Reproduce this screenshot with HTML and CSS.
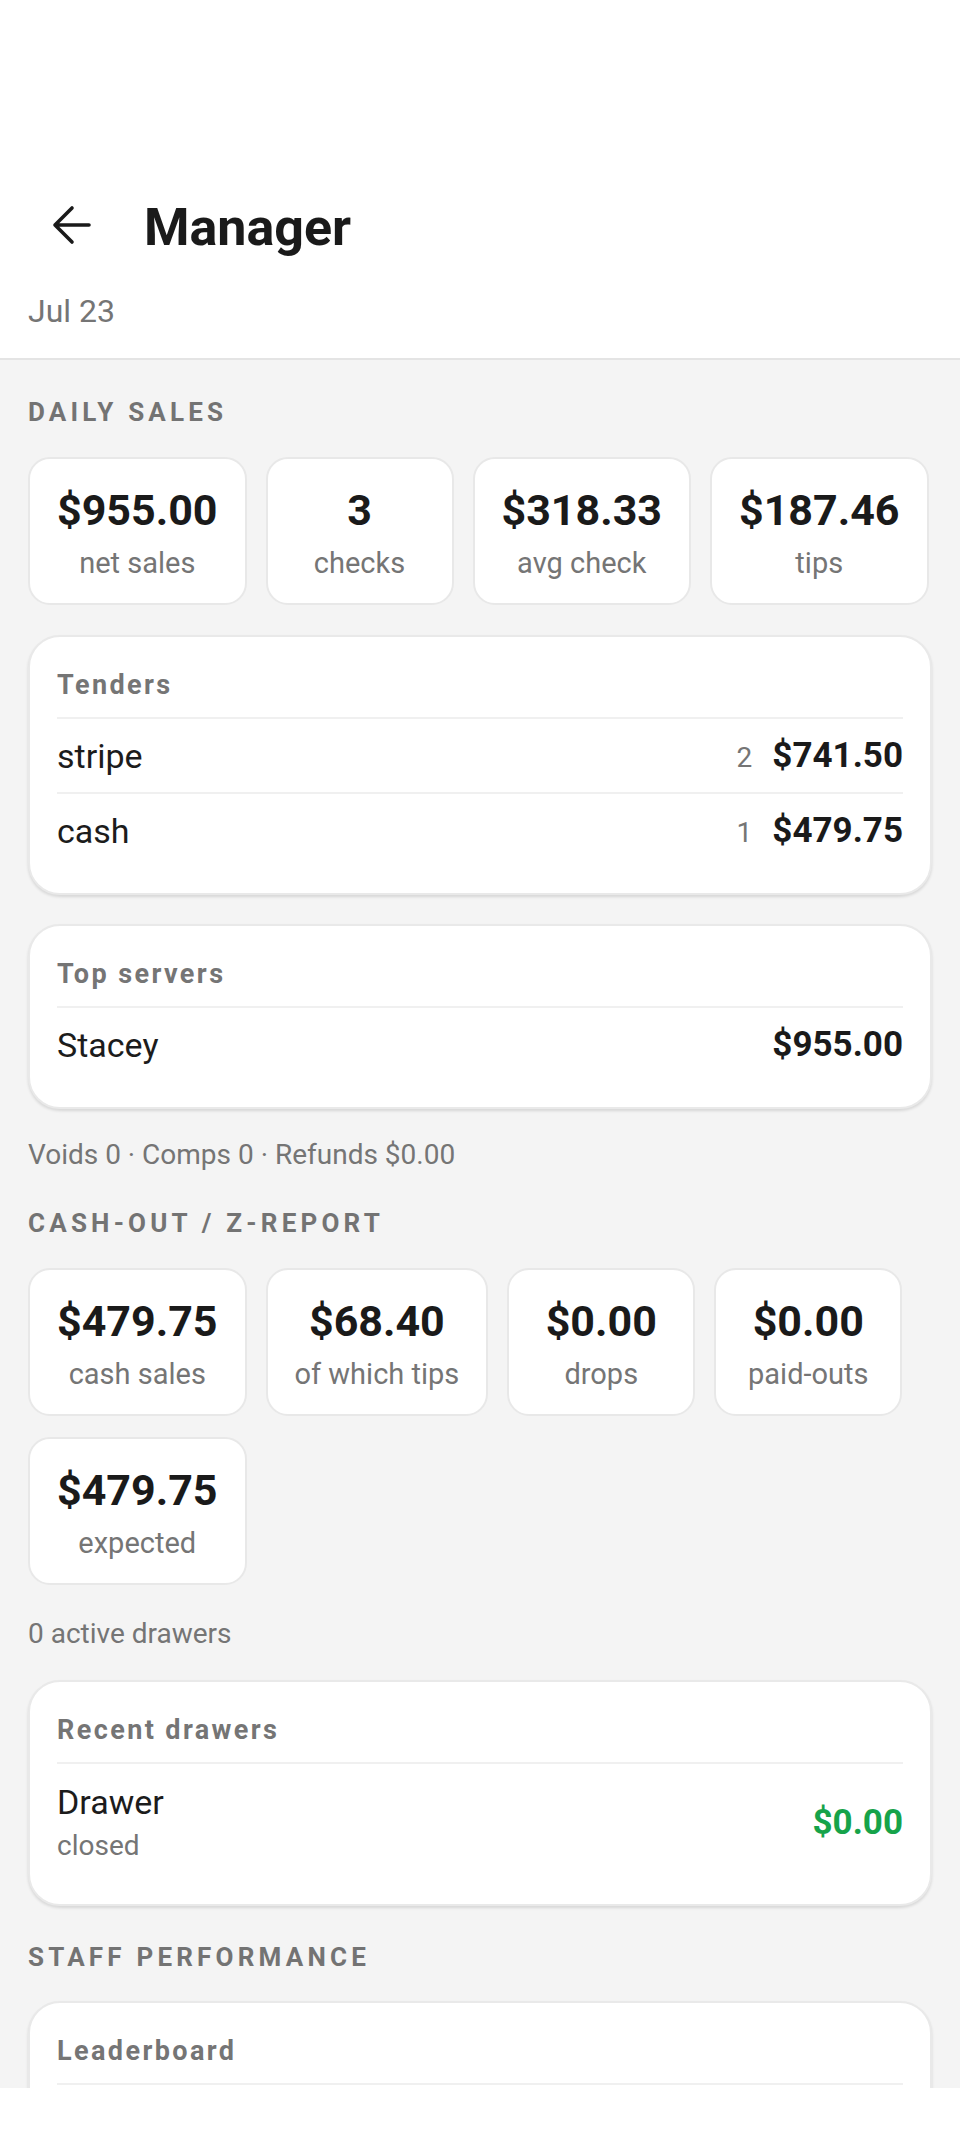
FILE: index.html
```html
<!DOCTYPE html>
<html lang="en">
<head>
<meta charset="utf-8">
<title>Manager</title>
<link rel="stylesheet" href="styles.css">
</head>
<body>
<div class="screen">
  <header class="topbar">
    <div class="title-row">
      <button class="back" aria-label="Back">
        <svg viewBox="0 0 40 40" aria-hidden="true"><path d="M38 20H4M21 3L4 20L21 37"/></svg>
      </button>
      <h1 class="title">Manager</h1>
    </div>
    <div class="date">Jul 23</div>
  </header>

  <main class="content">
    <h2 class="section-label first">DAILY SALES</h2>
    <div class="stats">
      <div class="stat"><div class="stat-value">$955.00</div><div class="stat-label">net sales</div></div>
      <div class="stat"><div class="stat-value">3</div><div class="stat-label">checks</div></div>
      <div class="stat"><div class="stat-value">$318.33</div><div class="stat-label">avg check</div></div>
      <div class="stat"><div class="stat-value">$187.46</div><div class="stat-label">tips</div></div>
    </div>

    <section class="card after-stats">
      <h3 class="card-title">Tenders</h3>
      <div class="row">
        <span class="row-name">stripe</span>
        <span class="row-right"><span class="count">2</span><span class="amount">$741.50</span></span>
      </div>
      <div class="row">
        <span class="row-name">cash</span>
        <span class="row-right"><span class="count">1</span><span class="amount">$479.75</span></span>
      </div>
    </section>

    <section class="card">
      <h3 class="card-title">Top servers</h3>
      <div class="row">
        <span class="row-name">Stacey</span>
        <span class="row-right"><span class="amount">$955.00</span></span>
      </div>
    </section>

    <p class="note">Voids 0 · Comps 0 · Refunds $0.00</p>

    <h2 class="section-label">CASH-OUT / Z-REPORT</h2>
    <div class="stats">
      <div class="stat"><div class="stat-value">$479.75</div><div class="stat-label">cash sales</div></div>
      <div class="stat"><div class="stat-value">$68.40</div><div class="stat-label">of which tips</div></div>
      <div class="stat"><div class="stat-value">$0.00</div><div class="stat-label">drops</div></div>
      <div class="stat"><div class="stat-value">$0.00</div><div class="stat-label">paid-outs</div></div>
      <div class="stat"><div class="stat-value">$479.75</div><div class="stat-label">expected</div></div>
    </div>

    <p class="note after-stats-note">0 active drawers</p>

    <section class="card">
      <h3 class="card-title">Recent drawers</h3>
      <div class="row row-double">
        <span class="row-left">
          <span class="row-name">Drawer</span>
          <span class="row-sub">closed</span>
        </span>
        <span class="row-right"><span class="amount positive">$0.00</span></span>
      </div>
    </section>

    <h2 class="section-label">STAFF PERFORMANCE</h2>
    <section class="card after-label">
      <h3 class="card-title">Leaderboard</h3>
      <div class="row row-empty"></div>
      <div class="row row-empty"></div>
    </section>
  </main>

  <div class="navbar"></div>
</div>
</body>
</html>
```

FILE: styles.css
```css
* {
  box-sizing: border-box;
}

html,
body {
  margin: 0;
  padding: 0;
}

body {
  width: 960px;
  height: 2142px;
  overflow: hidden;
  background: #f4f4f4;
  font-family: Roboto, "Noto Sans", "Liberation Sans", Arial, sans-serif;
  color: #1c1c1c;
}

.screen {
  width: 960px;
}

/* Header */
.topbar {
  background: #ffffff;
  padding: 191px 28px 28px;
  border-bottom: 2px solid #e4e4e4;
}

.title-row {
  display: flex;
  align-items: center;
  height: 67px;
}

.back {
  width: 48px;
  height: 48px;
  margin-left: 19px;
  padding: 0;
  border: 0;
  background: none;
  display: flex;
  align-items: center;
  justify-content: center;
}

.back svg {
  width: 40px;
  height: 40px;
  display: block;
  fill: none;
  stroke: #1a1a1a;
  stroke-width: 3.6;
  stroke-linecap: round;
  stroke-linejoin: round;
}

.title {
  margin: 0 0 0 49px;
  padding-top: 6px;
  font-size: 52px;
  line-height: 61px;
  font-weight: 700;
  color: #1a1a1a;
}

.date {
  margin-top: 34px;
  font-size: 32px;
  line-height: 38px;
  color: #757575;
}

/* Content */
.content {
  display: flex;
  flex-direction: column;
  padding: 0 28px;
}

.section-label {
  margin: 35px 0 0;
  font-size: 26px;
  line-height: 32px;
  font-weight: 700;
  letter-spacing: 4.2px;
  color: #737373;
}

.section-label.first {
  margin-top: 36px;
}

.stats {
  display: flex;
  flex-wrap: wrap;
  gap: 21px 19px;
  margin-top: 29px;
}

.stat {
  background: #ffffff;
  border: 2px solid #e8e8e8;
  border-radius: 22px;
  padding: 25px 27px 22px;
  min-width: 188px;
  text-align: center;
}

.stat-value {
  font-size: 43px;
  line-height: 52px;
  font-weight: 700;
  color: #1a1a1a;
  white-space: nowrap;
}

.stat-label {
  margin-top: 9px;
  font-size: 29px;
  line-height: 36px;
  color: #757575;
  white-space: nowrap;
}

.card {
  background: #ffffff;
  border: 2px solid #e9e9e9;
  border-radius: 32px;
  padding: 28px 27px 26px;
  margin-top: 29px;
  box-shadow: 0 2px 3px rgba(0, 0, 0, 0.12);
}

.card.after-stats {
  margin-top: 30px;
}

.card.after-label {
  margin-top: 28px;
}

.card-title {
  margin: 0 0 12px;
  font-size: 27px;
  line-height: 40px;
  font-weight: 700;
  letter-spacing: 2.4px;
  color: #757575;
}

.row {
  display: flex;
  align-items: center;
  justify-content: space-between;
  border-top: 2px solid #f0f0f0;
  padding: 17px 0 16px;
}

.row-double {
  padding: 18px 0 14px;
}

.row-empty {
  height: 75px;
}

.row-left {
  display: flex;
  flex-direction: column;
}

.row-name {
  font-size: 34px;
  line-height: 40px;
  color: #1c1c1c;
}

.row-sub {
  margin-top: 6px;
  font-size: 28px;
  line-height: 36px;
  color: #757575;
}

.row-right {
  display: flex;
  align-items: baseline;
  gap: 20px;
  height: 40px;
}

.count {
  font-size: 28px;
  line-height: 34px;
  color: #757575;
}

.amount {
  font-size: 35px;
  line-height: 40px;
  font-weight: 700;
  color: #1a1a1a;
}

.amount.positive {
  color: #16a34a;
}

.note {
  margin: 29px 0 0;
  font-size: 28px;
  line-height: 34px;
  color: #757575;
}

.note.after-stats-note {
  margin-top: 32px;
}

.navbar {
  position: fixed;
  left: 0;
  right: 0;
  bottom: 0;
  height: 54px;
  background: #ffffff;
}
```
